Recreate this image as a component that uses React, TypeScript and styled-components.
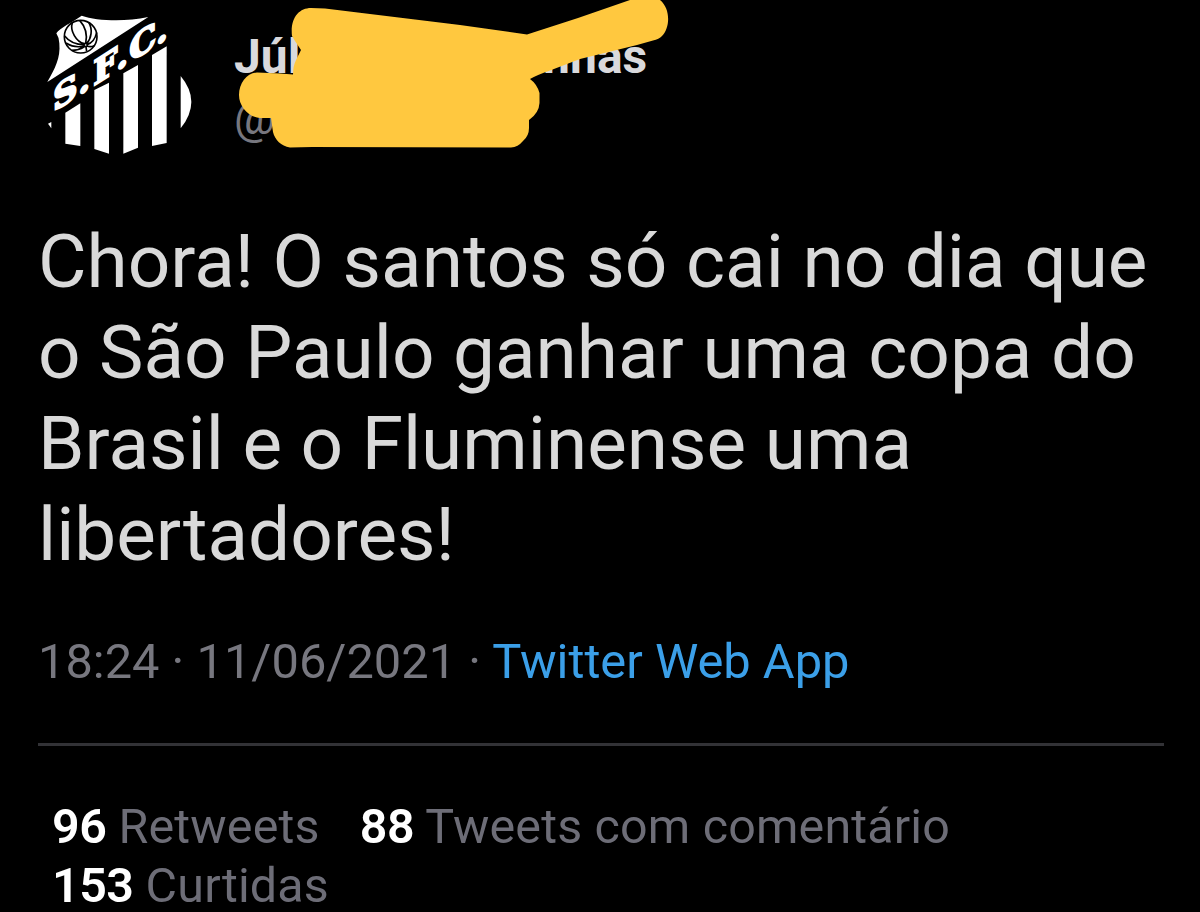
import React from "react";
import styled, { createGlobalStyle } from "styled-components";

const GlobalStyle = createGlobalStyle`
  body { margin: 0; background: #000; overflow: hidden; }
`;
const Page = styled.main`
  width: 1200px;
  height: 912px;
  box-sizing: border-box;
  overflow: hidden;
  background: #000;
  font-family: Roboto, sans-serif;
  padding: 0 36px 0 38px;
`;
const Header = styled.header`
  position: relative;
  display: flex;
  height: 216px;
`;
const Crest = styled.svg`
  width: 180px;
  height: 170px;
  margin-left: -8px;
  flex: none;
`;
const CrestLetters = styled.text`
  font: 700 102px "DejaVu Serif", serif;
  stroke: #fff;
  stroke-width: 6px;
`;
const Identity = styled.div`
  padding: 29px 0 0 24px;
  display: flex;
  flex-direction: column;
`;
const Name = styled.div`
  display: flex;
  gap: 230px;
  font-size: 48px;
  line-height: 56px;
  font-weight: 700;
  color: #d9d9dc;
`;
const Handle = styled.div`
  font-size: 46px;
  line-height: 56px;
  margin-top: 5px;
  color: #77777f;
`;
const Scribble = styled.svg`
  position: absolute;
  left: 192px;
  top: 0;
  width: 450px;
  height: 160px;
`;
const Body = styled.p`
  margin: 0;
  font-size: 74.7px;
  line-height: 91px;
  color: #d9d9d9;
  white-space: nowrap;
`;
const Meta = styled.div`
  margin-top: 54px;
  height: 109px;
  font-size: 48.8px;
  line-height: 56px;
  color: #77777f;
  white-space: nowrap;
`;
const Source = styled.a`
  color: #3b9fe8;
`;
const Stats = styled.div`
  border-top: 3px solid #323236;
  padding: 56px 0 0 14px;
  display: flex;
  flex-wrap: wrap;
  gap: 9px 40px;
  font-size: 48.4px;
  line-height: 50px;
  letter-spacing: 0.18px;
  color: #6d6d77;
`;
const Stat = styled.span`
  white-space: nowrap;
`;
const Count = styled.b`
  color: #fff;
  font-weight: 600;
  letter-spacing: -0.5px;
`;

function SantosCrest() {
  return (
    <Crest viewBox="0 0 540 510" fill="#fff">
      <path d="M52 246 C75 205 92 175 88 130 Q87 112 79 100 C90 83 125 68 155 47 C200 62 280 67 355 51 Z" />
      <g fill="none" stroke="#000" strokeWidth="5">
        <circle cx="152" cy="110" r="49" />
        <path d="M127 68 C119 92 139 126 163 131 M149 61 C168 82 172 108 167 130 M176 67 C189 88 184 115 170 131 M104 108 C121 130 143 134 163 134 M108 129 C127 141 146 142 162 138 M200 98 C195 120 184 130 171 134 M126 151 Q145 151 163 140 M193 137 Q181 142 171 138 M170 154 L168 141" />
        <circle cx="167" cy="135" r="5" />
      </g>
      <CrestLetters transform="matrix(1 -0.645 0 1 0 381)" x="69 145 190 259 298 378" y="0">S.F.C.</CrestLetters>
      <path d="M106 338 L151 310 V438 L106 431Z" />
      <path d="M193 270 L237 248 V461 L193 447Z" />
      <path d="M280 220 L324 195 V443 L280 461Z" />
      <path d="M366 165 L410 139 V429 L366 438Z" />
      <path d="M452 228 Q516 305 452 385Z" />
      <path d="M54 371 L64 366 V385 Z" />
    </Crest>
  );
}

export default function App() {
  return (
    <Page>
      <GlobalStyle />
      <Header>
        <SantosCrest />
        <Identity>
          <Name>
            <span>Júl</span>
            <span>inhas</span>
          </Name>
          <Handle>@</Handle>
        </Identity>
        <Scribble viewBox="230 0 450 160" fill="#ffc83f">
          <path d="M292 36 C290 18 299 8 311 8 L325 8.5 L460 25 L527 34.5 L578 18 L630 0 C639 -4 651 -5 660 0 C671 9 670 28 662 36 Q659 39 653 40.5 L637 45 L580 59 L550 70.5 Q537 75 530 79 Q537 84 539.5 93 V103 Q539 113 529 120 V128 Q529 136 523 141 Q518 147 511 147.5 L312 147 L290 147.5 C281 146 275 140 273 132 L271 118 H260 C248 117 239 106 239 95 C239 83 247 73 257 72.5 L280 73.5 L293 74.5 Q293 66 296 60 L301 50 L295 41 Z" />
        </Scribble>
      </Header>
      <Body>
        Chora! O santos só cai no dia que
        <br />o São Paulo ganhar uma copa do
        <br />Brasil e o Fluminense uma
        <br />libertadores!
      </Body>
      <Meta>
        18:24 · 11/06/2021 · <Source>Twitter Web App</Source>
      </Meta>
      <Stats>
        <Stat><Count>96</Count> Retweets</Stat>
        <Stat><Count>88</Count> Tweets com comentário</Stat>
        <Stat><Count>153</Count> Curtidas</Stat>
      </Stats>
    </Page>
  );
}
